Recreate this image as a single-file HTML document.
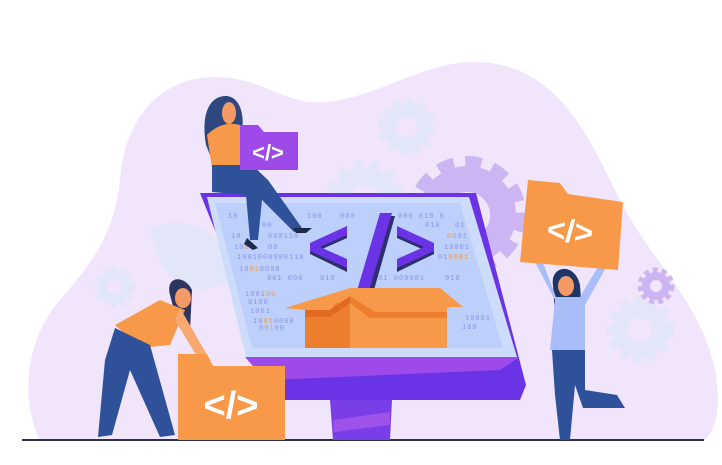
<!DOCTYPE html>
<html><head><meta charset="utf-8"><style>html,body{margin:0;padding:0;background:#fff;width:722px;height:465px;overflow:hidden}svg{display:block}</style></head>
<body>
<svg width="722" height="465" viewBox="0 0 722 465" xmlns="http://www.w3.org/2000/svg" font-family="Liberation Mono, monospace">
<!-- blob -->
<path d="M40 440 C20 400 25 340 60 300 C95 260 115 230 120 180 C125 110 170 70 230 78 C275 84 290 110 340 100 C390 90 430 60 480 62 C560 66 590 140 620 200 C650 260 700 300 715 370 C722 410 715 430 705 440 Z" fill="#f1e5fb"/>
<!-- light gears -->
<g fill="none" stroke="#e3e6f8">
<circle cx="407" cy="127" r="17" stroke-width="14"/><circle cx="407" cy="127" r="25" stroke-width="8" stroke-dasharray="7 6"/>
<circle cx="365" cy="200" r="24" stroke-width="18"/><circle cx="365" cy="200" r="35" stroke-width="10" stroke-dasharray="9 8"/>
<circle cx="115" cy="287" r="12" stroke-width="10"/><circle cx="115" cy="287" r="18" stroke-width="6" stroke-dasharray="5 4"/>
<circle cx="640" cy="330" r="20" stroke-width="16"/><circle cx="640" cy="330" r="30" stroke-width="8" stroke-dasharray="8 7"/>
</g>
<path d="M150 230 C180 210 230 230 230 280 C200 300 160 290 150 230Z" fill="#e3e6f8"/>
<!-- purple gear -->
<g fill="none" stroke="#cdb4f3">
<circle cx="467" cy="215" r="36" stroke-width="26"/>
<circle cx="467" cy="215" r="52" stroke-width="14" stroke-dasharray="16 11"/>
<circle cx="656" cy="286" r="10" stroke-width="8"/>
<circle cx="656" cy="286" r="16" stroke-width="5" stroke-dasharray="5 4"/>
</g>
<!-- floor -->
<rect x="22" y="439" width="682" height="2" fill="#2d2f4e"/>
<!-- stand -->
<path d="M330 400 L392 400 L390 440 L333 440Z" fill="#7a3ee8"/>
<path d="M333 420 L390 412 L390 425 L334 432Z" fill="#9d52ea"/>
<!-- monitor -->
<path d="M200 193 L476 193 L526 385 L520 400 L283 400 Z" fill="#6a33e6"/>
<path d="M245 357 L520 357 L500 370 L270 380 L283 400 Z" fill="#9e4aea"/>
<path d="M207 197 L469 197 L517 357 L246 357 Z" fill="#cddcfb"/>
<path d="M215 203 L460 203 L503 348 L252 348 Z" fill="#bdd0fb"/>
<!-- code text -->
<g font-size="7" fill="#8b93e6" letter-spacing="1">
<text x="228" y="218">10</text><text x="307" y="218">100</text><text x="398" y="218">000 010 0</text><text x="340" y="218">000</text>
<text x="262" y="227">00</text><text x="425" y="227">010</text><text x="455" y="227">01</text>
<text x="231" y="238">10</text><text x="268" y="238">000110</text><text x="447" y="238"><tspan fill="#f39a40">00</tspan>01</text>
<text x="234" y="249">10<tspan fill="#f39a40">0</tspan></text><text x="268" y="249">00</text><text x="444" y="249">10001</text>
<text x="237" y="259">1001000000110</text><text x="438" y="259">01<tspan fill="#f39a40">0001</tspan></text>
<text x="239" y="271">10<tspan fill="#f39a40">01</tspan>0000</text>
<text x="267" y="280">001 000</text><text x="320" y="280">010</text><text x="373" y="280">001 000001</text><text x="445" y="280">010</text>
<text x="245" y="296">1001<tspan fill="#f39a40">00</tspan></text><text x="248" y="304">0100</text><text x="250" y="313">1001</text>
<text x="253" y="323">10<tspan fill="#f39a40">01</tspan>0000</text><text x="259" y="330">0<tspan fill="#f39a40">01</tspan>00</text>
<text x="465" y="320">10001</text><text x="462" y="329">100</text>
</g>
<!-- big code glyph -->
<g fill="#2d2f6e"><path d="M347 230 L347 238 L320 250 L347 262 L347 272 L310 254 L310 247Z"/><path d="M397 230 L397 238 L424 250 L397 262 L397 272 L434 254 L434 247Z"/><path d="M360 297 L372 297 L395 216 L383 216Z"/></g>
<g fill="#6a33e6"><path d="M347 226 L347 235 L320 247 L347 259 L347 268 L310 251 L310 243Z"/><path d="M397 226 L397 235 L424 247 L397 259 L397 268 L434 251 L434 243Z"/><path d="M356 294 L368 294 L392 213 L380 213Z"/></g>
<!-- box -->
<path d="M350 288 L305 308 L450 308 L420 288Z" fill="#f8994a"/>
<rect x="350" y="303" width="97" height="45" fill="#f8994a"/>
<rect x="305" y="303" width="45" height="45" fill="#ec7e2d"/>
<path d="M285 308 L350 288 L330 310 L305 310Z" fill="#f8994a"/>
<path d="M350 288 L380 307 L463 307 L440 288Z" fill="#f8994a"/>
<path d="M305 310 L330 310 L350 296 L350 303 L330 317 L305 317Z" fill="#e06a22"/>
<path d="M350 296 L375 312 L447 312 L447 318 L370 318 L350 303Z" fill="#ec7e2d"/>
<!-- woman top -->
<path d="M206 145 C200 110 212 95 227 96 C242 98 246 120 240 140 L212 160Z" fill="#2e477f"/>
<ellipse cx="229" cy="113" rx="7" ry="11" fill="#f39a66"/>
<path d="M207 135 Q222 120 240 125 L245 168 L212 168 Z" fill="#f8994a"/>
<path d="M212 165 L252 165 L268 180 L302 228 L294 232 L262 200 L258 240 L250 240 L246 195 L212 192Z" fill="#2e519a"/>
<path d="M247 238 L258 248 L253 250 L244 244Z" fill="#1e2a4a"/>
<path d="M293 228 L312 228 L306 233 L296 233Z" fill="#1e2a4a"/>
<path d="M240 125 L258 125 L264 132 L298 132 L298 170 L240 170Z" fill="#9d4ae8"/>
<text x="268" y="160" font-family="Liberation Sans,sans-serif" font-weight="bold" font-size="22" fill="#fff" text-anchor="middle">&lt;/&gt;</text>
<!-- woman left -->
<path d="M170 295 C165 275 185 275 192 290 L190 330 L178 325Z" fill="#2e3660"/>
<ellipse cx="183" cy="298" rx="8" ry="10" fill="#f39a66"/>
<path d="M115 325 L160 300 L185 310 L170 345 L140 348Z" fill="#f8994a"/>
<path d="M180 308 L210 360 L202 365 L175 320Z" fill="#f8a870"/>
<path d="M115 328 L150 345 L175 435 L160 437 L130 370 L112 435 L98 437 L105 360Z" fill="#2e519a"/>
<!-- left folder -->
<path d="M178 354 L207 354 L213 366 L285 366 L285 440 L178 440Z" fill="#f8994a"/>
<text x="231" y="418" font-family="Liberation Sans,sans-serif" font-weight="bold" font-size="38" fill="#fff" text-anchor="middle">&lt;/&gt;</text>
<!-- right woman -->
<path d="M553 285 C550 265 575 262 580 285 L582 315 L555 315Z" fill="#1e3566"/>
<ellipse cx="566" cy="286" rx="8" ry="10" fill="#f39a66"/>
<path d="M535 262 L555 300 L550 350 L585 350 L585 305 L608 264 L602 260 L580 297 L556 297 L542 260Z" fill="#a9bdf8"/>
<path d="M552 350 L585 350 L585 390 L617 395 L625 408 L583 408 L575 385 L570 440 L560 440 L555 395Z" fill="#2e519a"/>
<!-- right folder -->
<path d="M528 180 L560 183 L568 194 L623 202 L618 270 L520 262Z" fill="#f8994a"/>
<text x="570" y="242" font-family="Liberation Sans,sans-serif" font-weight="bold" font-size="32" fill="#fff" text-anchor="middle" transform="rotate(5 570 232)">&lt;/&gt;</text>
</svg>
</body></html>
